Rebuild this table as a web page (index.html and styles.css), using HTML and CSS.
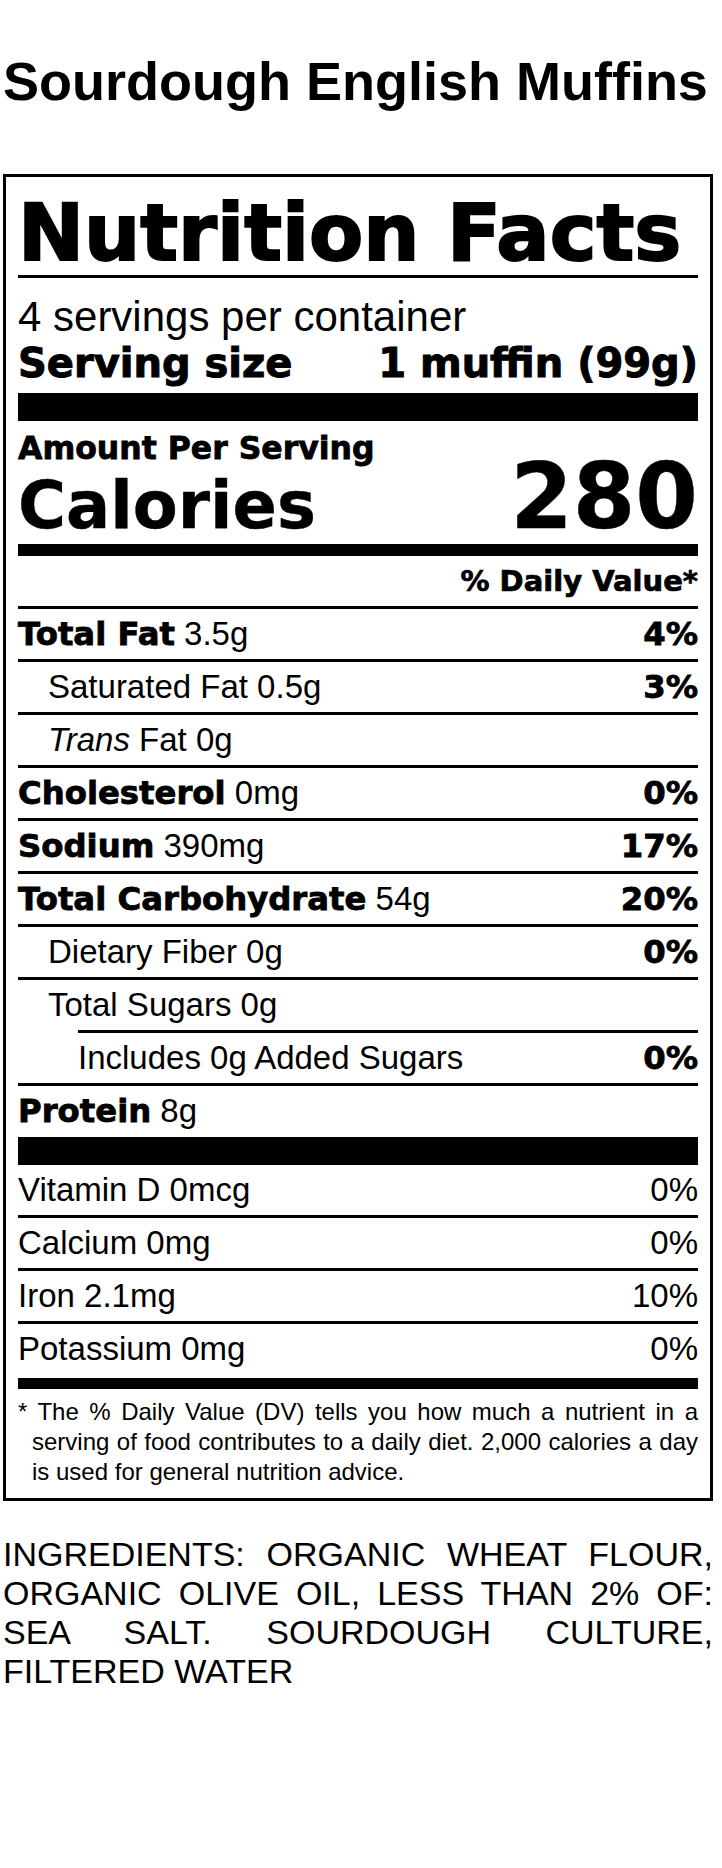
FILE: index.html
```html
<!DOCTYPE html>
<html lang="en">
<head>
<meta charset="utf-8">
<title>Sourdough English Muffins</title>
<link rel="stylesheet" href="styles.css">
</head>
<body>
<div class="page">
  <h1 class="title">Sourdough English Muffins</h1>
  <section class="label">
    <h2 class="nf">Nutrition Facts</h2>
    <div class="servings">4 servings per container</div>
    <div class="serving-size"><span>Serving size</span><span>1 muffin (99g)</span></div>
    <div class="calories-block">
      <div class="amount">Amount Per Serving</div>
      <div class="calories"><span class="cal-label">Calories</span><span class="cal-num">280</span></div>
    </div>
    <div class="dv-head">% Daily Value*</div>
    <div class="row"><span><b>Total Fat</b> 3.5g</span><b>4%</b></div>
    <div class="row sub"><span>Saturated Fat 0.5g</span><b>3%</b></div>
    <div class="row sub"><span><i>Trans</i> Fat 0g</span></div>
    <div class="row"><span><b>Cholesterol</b> 0mg</span><b>0%</b></div>
    <div class="row"><span><b>Sodium</b> 390mg</span><b>17%</b></div>
    <div class="row"><span><b>Total Carbohydrate</b> 54g</span><b>20%</b></div>
    <div class="row sub"><span>Dietary Fiber 0g</span><b>0%</b></div>
    <div class="row sub no-rule"><span>Total Sugars 0g</span></div>
    <div class="indent-rule"></div>
    <div class="row sub2"><span>Includes 0g Added Sugars</span><b>0%</b></div>
    <div class="row protein"><span><b>Protein</b> 8g</span></div>
    <div class="vitamins">
      <div class="row"><span>Vitamin D 0mcg</span><span>0%</span></div>
      <div class="row"><span>Calcium 0mg</span><span>0%</span></div>
      <div class="row"><span>Iron 2.1mg</span><span>10%</span></div>
      <div class="row last"><span>Potassium 0mg</span><span>0%</span></div>
    </div>
    <p class="footnote">* The % Daily Value (DV) tells you how much a nutrient in a serving of food contributes to a daily diet. 2,000 calories a day is used for general nutrition advice.</p>
  </section>
  <p class="ingredients">INGREDIENTS: ORGANIC WHEAT FLOUR, ORGANIC OLIVE OIL, LESS THAN 2% OF: SEA SALT. SOURDOUGH CULTURE, FILTERED WATER</p>
</div>
</body>
</html>
```

FILE: styles.css
```css
html, body {
  margin: 0;
  padding: 0;
  background: #fff;
  color: #000;
}
body {
  font-family: "Liberation Sans", Arial, sans-serif;
}
.page {
  width: 710px;
  padding-left: 3px;
}
.title {
  margin: 54px 0 65px;
  font-size: 54px;
  line-height: 55px;
  font-weight: 700;
  white-space: nowrap;
}
.label {
  box-sizing: border-box;
  width: 710px;
  border: 3px solid #000;
  padding: 0 12px;
}
.nf, .serving-size, .amount, .calories, .dv-head, .label b {
  font-family: "DejaVu Sans", Verdana, sans-serif;
  font-weight: 700;
  -webkit-text-stroke: 0.025em #000;
}
.nf {
  margin: 0;
  padding-top: 14px;
  font-size: 79px;
  line-height: 84px;
  border-bottom: 3px solid #000;
  white-space: nowrap;
}
.servings {
  padding-top: 17px;
  font-size: 42px;
  line-height: 44px;
}
.serving-size {
  display: flex;
  justify-content: space-between;
  font-size: 40px;
  line-height: 48px;
  padding-bottom: 6px;
}
.calories-block {
  border-top: 28px solid #000;
  padding-top: 9px;
  padding-bottom: 16px;
}
.amount {
  font-size: 31.5px;
  line-height: 36px;
}
.calories {
  display: flex;
  justify-content: space-between;
  align-items: baseline;
  height: 62px;
  line-height: 62px;
}
.cal-label {
  font-size: 65.5px;
}
.cal-num {
  font-size: 90px;
}
.dv-head {
  border-top: 12px solid #000;
  height: 50px;
  line-height: 50px;
  font-size: 29px;
  text-align: right;
  border-bottom: 3px solid #000;
}
.row {
  display: flex;
  justify-content: space-between;
  height: 50px;
  line-height: 50px;
  font-size: 33px;
  border-bottom: 3px solid #000;
  white-space: nowrap;
}
.row b {
  font-size: 32.3px;
}
.sub {
  padding-left: 30px;
}
.sub2 {
  padding-left: 60px;
}
.no-rule {
  border-bottom: 0;
}
.indent-rule {
  margin-left: 60px;
  height: 3px;
  background: #000;
}
.protein {
  height: 51px;
  border-bottom: 0;
}
.vitamins {
  border-top: 28px solid #000;
}
.vitamins .row.last {
  height: 54px;
  border-bottom: 0;
}
.footnote {
  margin: 0;
  border-top: 11px solid #000;
  padding: 8px 0 11px 14px;
  text-indent: -14px;
  font-size: 24px;
  line-height: 30px;
  text-align: justify;
}
.ingredients {
  margin: 34px 0 0;
  font-size: 34px;
  line-height: 39px;
  text-align: justify;
}
```
